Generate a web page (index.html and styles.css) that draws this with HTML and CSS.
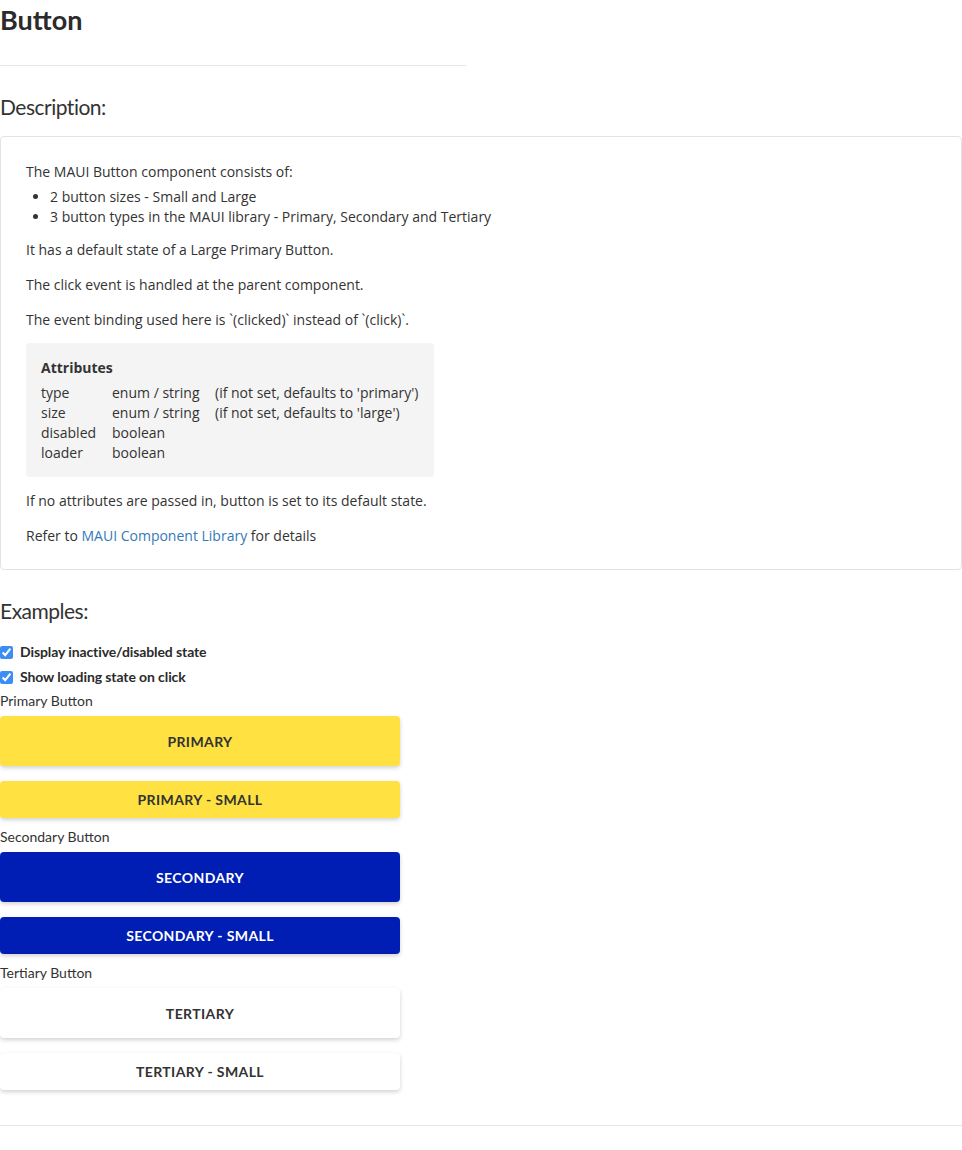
FILE: index.html
```html
<!DOCTYPE html>
<html lang="en">
<head>
<meta charset="utf-8">
<title>Button</title>
<link rel="stylesheet" href="styles.css">
</head>
<body>
<h1 class="title">Button</h1>
<hr class="title-rule">
<h2 class="section-title">Description:</h2>
<div class="card">
  <p class="intro">The MAUI Button component consists of:</p>
  <ul class="list">
    <li>2 button sizes - Small and Large</li>
    <li>3 button types in the MAUI library - Primary, Secondary and Tertiary</li>
  </ul>
  <p class="para">It has a default state of a Large Primary Button.</p>
  <p class="para">The click event is handled at the parent component.</p>
  <p class="para tight">The event binding used here is `(clicked)` instead of `(click)`.</p>
  <div class="attrs">
    <div class="attrs-title">Attributes</div>
    <div class="attrs-grid">
      <span>type</span><span>enum / string</span><span>(if not set, defaults to 'primary')</span>
      <span>size</span><span>enum / string</span><span>(if not set, defaults to 'large')</span>
      <span>disabled</span><span>boolean</span><span></span>
      <span>loader</span><span>boolean</span><span></span>
    </div>
  </div>
  <p class="para">If no attributes are passed in, button is set to its default state.</p>
  <p class="para last">Refer to <a class="link" href="#">MAUI Component Library</a> for details</p>
</div>
<h2 class="section-title examples-title">Examples:</h2>
<div class="examples">
  <label class="check"><input type="checkbox" checked><span>Display inactive/disabled state</span></label>
  <label class="check"><input type="checkbox" checked><span>Show loading state on click</span></label>
  <div class="group first">
    <div class="group-label">Primary Button</div>
    <button class="btn large primary">Primary</button>
    <button class="btn small primary">Primary - Small</button>
  </div>
  <div class="group">
    <div class="group-label">Secondary Button</div>
    <button class="btn large secondary">Secondary</button>
    <button class="btn small secondary">Secondary - Small</button>
  </div>
  <div class="group">
    <div class="group-label">Tertiary Button</div>
    <button class="btn large tertiary">Tertiary</button>
    <button class="btn small tertiary">Tertiary - Small</button>
  </div>
</div>
<hr class="bottom-rule">
</body>
</html>
```
FILE: styles.css
```css
html, body {
  margin: 0;
  padding: 0;
  background: #fff;
}
body {
  color: #333;
  font-family: Lato, "Noto Sans", sans-serif;
  font-size: 14px;
}
.title {
  margin: 4px 0 0;
  font-size: 27px;
  line-height: 32px;
  font-weight: 700;
  color: #2b2b2b;
}
.title-rule {
  width: 466px;
  margin: 29px 0 0;
  border: 0;
  border-top: 1px solid #e6e6e6;
  height: 0;
}
.section-title {
  margin: 26px 0 0;
  font-size: 21px;
  line-height: 30px;
  font-weight: 400;
  letter-spacing: -0.5px;
  color: #333;
}
.card {
  margin-top: 14px;
  border: 1px solid #e3e3e3;
  border-radius: 4px;
  padding: 25px 25px 23px;
  font-family: "Open Sans", "Noto Sans", sans-serif;
  font-size: 14px;
  line-height: 20px;
  color: #333;
}
.card p { margin: 0; }
.intro { margin-bottom: 5px !important; }
.list {
  margin: 0 0 13px;
  padding-left: 24px;
}
.para { margin: 0 0 15px !important; }
.para.tight { margin-bottom: 13px !important; }
.para.last { margin-bottom: 0 !important; }
.attrs {
  width: 408px;
  box-sizing: border-box;
  background: #f4f4f4;
  border-radius: 4px;
  padding: 15px 15px 14px;
  margin-bottom: 14px;
}
.attrs-title {
  font-weight: 700;
  margin-bottom: 5px;
}
.attrs-grid {
  display: grid;
  grid-template-columns: 71px 103px auto;
}
.link {
  color: #337ab7;
  text-decoration: none;
}
.examples-title {
  margin-top: 26px;
}
.examples {
  display: flex;
  flex-direction: column;
  margin-top: 13px;
}
.check {
  display: flex;
  align-items: center;
  height: 25px;
  font-weight: 700;
  font-size: 14px;
  letter-spacing: -0.1px;
  color: #2b2b2b;
}
.check input {
  width: 13px;
  height: 13px;
  margin: 1px 7px 0 0;
  accent-color: #3a8ef5;
}
.group {
  display: flex;
  flex-direction: column;
  margin-top: 9px;
}
.group.first {
  margin-top: 2px;
}
.group-label {
  font-size: 14px;
  line-height: 20px;
  margin-bottom: 5px;
  color: #333;
}
.btn {
  width: 400px;
  border: 0;
  border-radius: 4px;
  font-family: Lato, "Noto Sans", sans-serif;
  font-weight: 700;
  font-size: 14px;
  letter-spacing: 0.4px;
  text-transform: uppercase;
  box-shadow: 0 2px 4px rgba(0, 0, 0, 0.18);
  padding: 0;
  cursor: pointer;
}
.btn.large { height: 50px; }
.btn.small {
  height: 37px;
  margin-top: 15px;
}
.primary {
  background: #ffe241;
  color: #333;
}
.secondary {
  background: #001eb4;
  color: #fff;
}
.tertiary {
  background: #fff;
  color: #333;
}
.bottom-rule {
  margin: 35px 0 0;
  border: 0;
  border-top: 1px solid #e6e6e6;
  height: 0;
}
```
